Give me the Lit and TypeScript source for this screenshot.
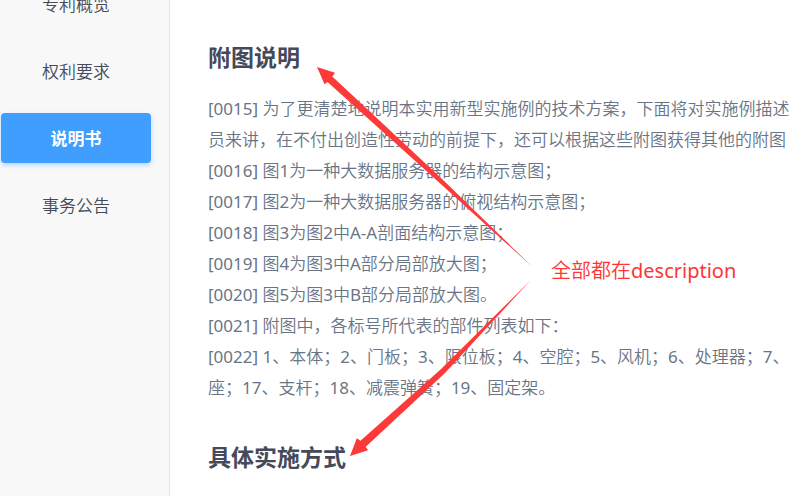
import { LitElement, html, css } from "lit";
import { customElement, state } from "lit/decorators.js";

const sections = ["专利概览", "权利要求", "说明书", "事务公告"];

const paragraphs: string[][] = [
  [
    "[0015] 为了更清楚地说明本实用新型实施例的技术方案，下面将对实施例描述",
    "员来讲，在不付出创造性劳动的前提下，还可以根据这些附图获得其他的附图",
  ],
  ["[0016] 图1为一种大数据服务器的结构示意图；"],
  ["[0017] 图2为一种大数据服务器的俯视结构示意图；"],
  ["[0018] 图3为图2中A-A剖面结构示意图；"],
  ["[0019] 图4为图3中A部分局部放大图；"],
  ["[0020] 图5为图3中B部分局部放大图。"],
  ["[0021] 附图中，各标号所代表的部件列表如下："],
  [
    "[0022] 1、本体；2、门板；3、限位板；4、空腔；5、风机；6、处理器；7、",
    "座；17、支杆；18、减震弹簧；19、固定架。",
  ],
];

@customElement("section-nav")
class SectionNav extends LitElement {
  @state() private current = "说明书";

  static styles = css`
    :host {
      display: block;
    }
    .list {
      display: flex;
      flex-direction: column;
      gap: 17px;
      width: 150px;
      margin: -21px 0 0 1px;
    }
    .item {
      height: 50px;
      padding: 0 0 2px;
      border: 0;
      border-radius: 4px;
      background: transparent;
      color: #454a59;
      font: inherit;
      cursor: pointer;
    }
    .active {
      background: #409eff;
      color: #fff;
      font-family: "Noto Sans", "Noto Sans CJK SC", sans-serif;
      font-weight: 700;
      box-shadow: 0 2px 4px rgba(64, 158, 255, 0.4);
    }
  `;

  render() {
    return html`<nav class="list">
      ${sections.map(
        (name) => html`<button
          class="item ${name === this.current ? "active" : ""}"
          @click=${() => (this.current = name)}
        >${name}</button>`
      )}
    </nav>`;
  }
}

@customElement("app-root")
class AppRoot extends LitElement {
  static styles = css`
    :host {
      display: block;
      position: relative;
      overflow: hidden;
      background: #fff;
      font-family: "Noto Sans", "Noto Sans CJK SC DemiLight", "Noto Sans CJK SC", sans-serif;
      font-size: 17px;
      font-weight: 400;
    }
    .page {
      display: flex;
      min-height: 100vh;
    }
    .side {
      flex: 0 0 169px;
      background: #f8f8f8;
      border-right: 1px solid #e2e3e5;
    }
    .doc {
      flex: 1;
      min-width: 0;
      overflow: hidden;
      padding: 41px 0 0 38px;
      white-space: nowrap;
    }
    .title {
      margin: 0;
      color: #454a5b;
      font-family: "Noto Sans", "Noto Sans CJK SC", sans-serif;
      font-size: 23px;
      line-height: 32px;
      font-weight: 700;
    }
    .body {
      margin: 20px 0 38px;
    }
    .para {
      margin: 0;
      color: #697586;
      line-height: 31px;
    }
    .arrows {
      position: absolute;
      left: 0;
      top: 0;
      pointer-events: none;
    }
    .arrow {
      fill: #fd3a3a;
    }
    .note {
      position: absolute;
      left: 551px;
      top: 256px;
      color: #fd3535;
      font-size: 20px;
      line-height: 30px;
      white-space: nowrap;
    }
  `;

  render() {
    return html`
      <div class="page">
        <aside class="side"><section-nav></section-nav></aside>
        <main class="doc">
          <h2 class="title">附图说明</h2>
          <div class="body">
            ${paragraphs.map(
              (lines) => html`<p class="para">${lines.map((line, i) => html`${i ? html`<br />` : ""}${line}`)}</p>`
            )}
          </div>
          <h2 class="title">具体实施方式</h2>
        </main>
      </div>
      <svg class="arrows" width="802" height="496" viewBox="0 0 802 496" aria-hidden="true">
        <path class="arrow" d="M317 67 L335 72.8 L332.3 76.5 L440 177 L532.5 267 L438 181.5 L327.5 82 L324.5 84.3 Z" />
        <path class="arrow" d="M350 456 L356.8 438.3 L360.5 440.8 L440 370 L530.5 280.5 L445 373 L365.8 446.8 L368 450.3 Z" />
      </svg>
      <div class="note">全部都在description</div>
    `;
  }
}
